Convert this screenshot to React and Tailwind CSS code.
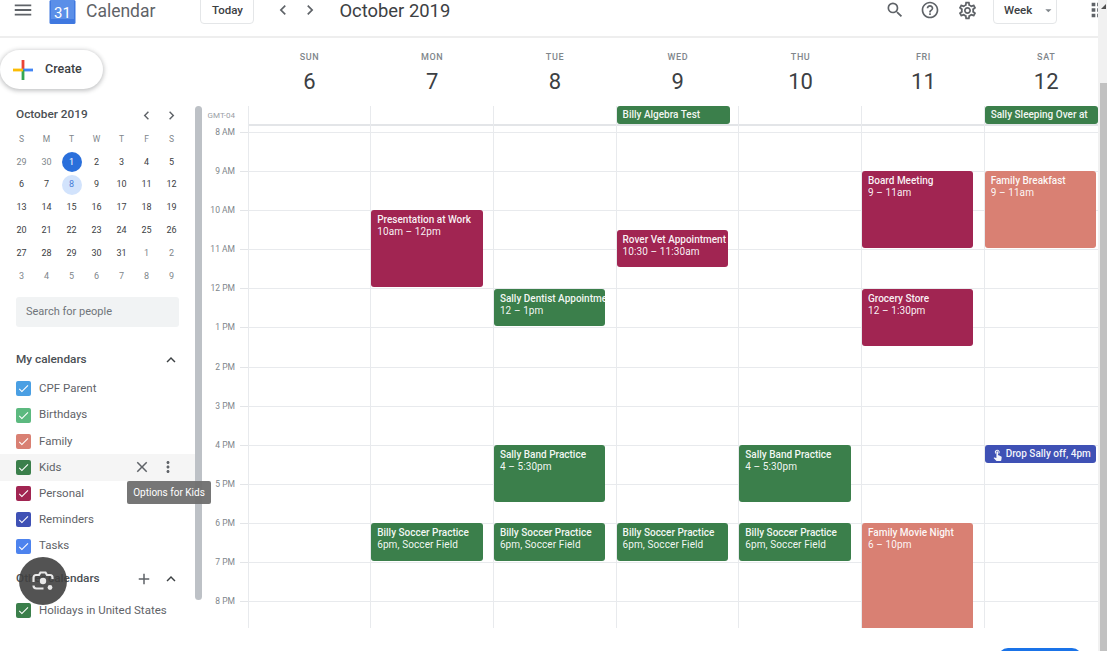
import React from "react";
import { MdMenu, MdChevronLeft, MdChevronRight, MdSearch, MdHelpOutline, MdOutlineSettings, MdArrowDropDown, MdApps, MdExpandLess, MdClose, MdMoreVert, MdAdd, MdCheck, MdTouchApp } from "react-icons/md";

const GREEN = "bg-[#3b7f4b]";
const WINE = "bg-[#a12552]";
const SALMON = "bg-[#d98073]";
const INDIGO = "bg-[#3f51b5]";

const days = [
  ["SUN", "6"], ["MON", "7"], ["TUE", "8"], ["WED", "9"], ["THU", "10"], ["FRI", "11"], ["SAT", "12"],
];
const hours = ["8 AM", "9 AM", "10 AM", "11 AM", "12 PM", "1 PM", "2 PM", "3 PM", "4 PM", "5 PM", "6 PM", "7 PM", "8 PM"];

const soccer = { title: "Billy Soccer Practice", time: "6pm, Soccer Field", top: 417, h: 38, color: GREEN };
const band = { title: "Sally Band Practice", time: "4 – 5:30pm", top: 339, h: 57, color: GREEN };

const events = [
  [],
  [{ title: "Presentation at Work", time: "10am – 12pm", top: 104, h: 77, color: WINE }, soccer],
  [{ title: "Sally Dentist Appointment", time: "12 – 1pm", top: 183, h: 37, color: GREEN }, band, soccer],
  [{ title: "Billy Algebra Test", top: 0, h: 18, color: GREEN, allDay: true }, { title: "Rover Vet Appointment", time: "10:30 – 11:30am", top: 124, h: 37, color: WINE }, soccer],
  [band, soccer],
  [{ title: "Board Meeting", time: "9 – 11am", top: 65, h: 77, color: WINE }, { title: "Grocery Store", time: "12 – 1:30pm", top: 183, h: 57, color: WINE }, { title: "Family Movie Night", time: "6 – 10pm", top: 417, h: 120, color: SALMON }],
  [{ title: "Sally Sleeping Over at", top: 0, h: 18, color: GREEN, allDay: true }, { title: "Family Breakfast", time: "9 – 11am", top: 65, h: 77, color: SALMON }, { title: "Drop Sally off, 4pm", top: 339, h: 18, color: INDIGO, touch: true }],
];

const mini = [
  ["29", "30", "1", "2", "3", "4", "5"],
  ["6", "7", "8", "9", "10", "11", "12"],
  ["13", "14", "15", "16", "17", "18", "19"],
  ["20", "21", "22", "23", "24", "25", "26"],
  ["27", "28", "29", "30", "31", "1", "2"],
  ["3", "4", "5", "6", "7", "8", "9"],
];

const calendars = [
  ["CPF Parent", "bg-[#4a9fe3]"],
  ["Birthdays", "bg-[#5cb97f]"],
  ["Family", "bg-[#d98073]"],
  ["Kids", "bg-[#3b7f4b]"],
  ["Personal", "bg-[#a12552]"],
  ["Reminders", "bg-[#3f51b5]"],
  ["Tasks", "bg-[#4d83ee]"],
];

function CalRow({ name, color, hover }) {
  return (
    <div className={`flex h-[26.2px] items-center pl-4 ${hover ? "bg-[#f5f5f5]" : ""}`}>
      <span className={`flex h-[15px] w-[15px] items-center justify-center rounded-[2px] ${color}`}>
        <MdCheck className="text-white" size={13} />
      </span>
      <span className="ml-2 flex-1 text-[11.5px] text-[#5f6368]">{name}</span>
      {hover && (
        <span className="flex items-center gap-[8px] pr-[18px] text-[#5f6368]">
          <MdClose size={18} />
          <MdMoreVert size={18} />
        </span>
      )}
    </div>
  );
}

function Event({ e }) {
  return (
    <div
      style={{ top: e.top, height: e.h }}
      className={`absolute left-0 overflow-hidden whitespace-nowrap rounded-[3px] px-[6px] text-[10px] leading-[12px] text-white/95 ${e.allDay ? "w-[113px]" : "w-[111.5px]"} ${e.color} ${e.time ? "pt-[4px]" : "flex items-center"}`}
    >
      {e.touch && <MdTouchApp size={13} className="mr-[2px] shrink-0" />}
      <div className="font-medium">{e.title}</div>
      {e.time && <div className="tracking-[0.1px]">{e.time}</div>}
    </div>
  );
}

function Lens() {
  return (
    <div className="absolute left-[19px] top-[557px] flex h-12 w-12 items-center justify-center rounded-full bg-[#404040]/90">
      <svg width="26" height="26" viewBox="0 0 26 26" fill="none">
        <path d="M3.5 14V9.5A2.5 2.5 0 0 1 6 7h3l1.5-2.5h5L17 7h3a2.5 2.5 0 0 1 2.5 2.5V11" stroke="#e8e8e8" strokeWidth="2.2" />
        <path d="M3.5 17.5A3 3 0 0 0 6.500 20.500h7" stroke="#e8e8e8" strokeWidth="2.2" />
        <circle cx="13" cy="13" r="3.2" fill="#e8e8e8" />
        <circle cx="20" cy="19.500" r="2.400" fill="#e8e8e8" />
      </svg>
    </div>
  );
}

export default function App() {
  return (
    <div className="relative flex h-[651px] w-[1107px] overflow-hidden bg-white font-['Roboto',sans-serif]">
      <div className="flex w-[1098px] shrink-0 flex-col">
        <header className="flex h-[38px] shrink-0 items-start border-b-2 border-[#eeeeee]">
          <div className="flex h-[20px] w-full items-center">
            <MdMenu size={22} className="ml-[12px] text-[#5f6368]" />
            <svg width="27" height="24" viewBox="0 0 27 24" className="ml-[15px] mt-[4px] shrink-0">
              <rect x="0.5" width="26" height="24" rx="1.5" fill="#3f78e0" />
              <rect x="2" width="23" height="19" fill="#5b8fe8" />
              <text x="13.5" y="18" textAnchor="middle" fontSize="15" fill="#fff" fontFamily="Roboto, sans-serif">31</text>
            </svg>
            <span className="ml-[10px] pt-[1px] text-[17.5px] leading-[20px] text-[#5f6368]">Calendar</span>
            <button className="ml-[45px] flex h-[28px] w-[54px] items-center justify-center rounded-[4px] border border-[#e4e6e8] pt-[2px] text-[11.5px] font-medium text-[#3c4043]">Today</button>
            <MdChevronLeft size={20} className="ml-[19px] text-[#5f6368]" />
            <MdChevronRight size={20} className="ml-[7px] text-[#5f6368]" />
            <span className="ml-[19px] pt-[1px] text-[18.4px] leading-[20px] text-[#3c4043]">October 2019</span>
            <span className="flex-1" />
            <MdSearch size={20} className="text-[#5f6368]" />
            <MdHelpOutline size={20} className="ml-[15px] text-[#5f6368]" />
            <MdOutlineSettings size={21} className="ml-[17px] text-[#5f6368]" />
            <button className="ml-[15px] flex h-[28px] w-[64px] items-center rounded-[4px] border border-[#e4e6e8] pl-[10px] pt-[1px] text-[11.5px] font-medium text-[#3c4043]">
              Week
              <MdArrowDropDown size={17} className="ml-[9px] text-[#80868b]" />
            </button>
            <MdApps size={22} className="ml-[31px] mr-[-12px] shrink-0 text-[#5f6368]" />
          </div>
        </header>

        <div className="flex h-[590px] shrink-0 overflow-hidden">
          <aside className="relative w-[195px] shrink-0">
            <button className="ml-0 mt-[12px] flex h-[39px] w-[103px] items-center rounded-full bg-white pl-[13px] text-[12.5px] font-medium text-[#3c4043] shadow-[0_1px_4px_1px_rgba(60,64,67,0.3)]">
              <svg width="20" height="20" viewBox="0 0 20 20">
                <rect x="8.6" y="0" width="2.8" height="10" fill="#ea4335" />
                <rect x="10" y="8.6" width="10" height="2.8" fill="#4285f4" />
                <rect x="8.6" y="10" width="2.8" height="10" fill="#34a853" />
                <rect x="0" y="8.6" width="10" height="2.8" fill="#fbbc05" />
              </svg>
              <span className="ml-[12px]">Create</span>
            </button>

            <div className="ml-4 mt-[17px] flex h-[18px] w-[164px] items-center">
              <span className="flex-1 text-[11.8px] font-medium text-[#4b4f54]">October 2019</span>
              <MdChevronLeft size={17} className="text-[#5f6368]" />
              <MdChevronRight size={17} className="ml-2 text-[#5f6368]" />
            </div>

            <div className="ml-[9px] mt-[4px] grid w-[175px] grid-cols-7 text-center text-[9px]">
              {["S", "M", "T", "W", "T", "F", "S"].map((d, i) => (
                <div key={i} className="flex h-[23px] items-center justify-center text-[8.5px] text-[#80868b]">{d}</div>
              ))}
              {mini.flat().map((d, i) => {
                const muted = i < 2 || i >= 33;
                const today = i === 2;
                const sel = i === 9;
                return (
                  <div key={i} className="flex h-[22.8px] items-center justify-center">
                    <span className={`flex h-[20px] w-[20px] items-center justify-center rounded-full ${today ? "bg-[#2a6fdb] text-white" : sel ? "bg-[#d2e3fc] text-[#4a7fd8]" : muted ? "text-[#80868b]" : "text-[#3c4043]"}`}>{d}</span>
                  </div>
                );
              })}
            </div>

            <div className="ml-4 mt-[9px] flex h-[30px] w-[163px] items-center rounded-[3px] bg-[#f1f3f4] pl-[10px] text-[11px] text-[#70757a]">Search for people</div>

            <div className="ml-4 mt-[23px] flex h-[20px] w-[164px] items-center justify-between text-[11.8px] font-medium text-[#4b4f54]">
              My calendars
              <MdExpandLess size={18} className="text-[#3c4043]" />
            </div>
            <div className="mt-[6px]">
              {calendars.map(([n, c]) => (
                <CalRow key={n} name={n} color={c} hover={n === "Kids"} />
              ))}
            </div>
            <div className="ml-4 mt-[10px] flex h-[20px] w-[164px] items-center text-[11.8px] font-medium text-[#4b4f54]">
              <span className="flex-1">Other calendars</span>
              <MdAdd size={18} className="text-[#5f6368]" />
              <MdExpandLess size={18} className="ml-[9px] text-[#3c4043]" />
            </div>
            <div className="mt-[8px]">
              <CalRow name="Holidays in United States" color="bg-[#3b7f4b]" />
            </div>
          </aside>

          <div className="w-[7px] shrink-0 pt-[68px]">
            <div className="h-[494px] rounded-full bg-[#bdc1c6]" />
          </div>

          <main className="flex min-w-0 flex-1 flex-col overflow-hidden">
            <div className="flex h-[68px] shrink-0 pl-[46px]">
              {days.map(([d, n]) => (
                <div key={d} className="flex w-[122.8px] shrink-0 flex-col items-center pt-[14px]">
                  <span className="text-[9px] font-medium leading-[11px] tracking-[0.6px] text-[#80868b]">{d}</span>
                  <span className="mt-[5px] text-[22px] leading-[28px] text-[#3c4043]">{n}</span>
                </div>
              ))}
            </div>
            <div className="flex flex-1 overflow-hidden">
              <div className="w-[45.5px] shrink-0">
                <div className="flex h-[20px] items-center justify-end pr-[12.5px] text-[8px] text-[#9aa0a6]">GMT-04</div>
                <div className="h-[6px]" />
                {hours.map((h) => (
                  <div key={h} className="relative h-[39.1px]">
                    <span className="absolute right-[12.5px] top-0 -translate-y-1/2 text-[8.5px] text-[#80868b]">{h}</span>
                    <span className="absolute right-0 top-0 h-px w-[8px] bg-[#e3e5e8]" />
                  </div>
                ))}
              </div>
              {days.map(([d], i) => (
                <div key={d} className="relative w-[122.7px] shrink-0 border-l border-[#e8eaed]">
                  <div className="h-[20px] border-b-2 border-[#e3e5e8]" />
                  <div className="h-[6px]" />
                  {hours.map((h) => (
                    <div key={h} className="h-[39.1px] border-t border-[#e8eaed]" />
                  ))}
                  {events[i].map((e) => (
                    <Event key={e.title} e={e} />
                  ))}
                </div>
              ))}
            </div>
          </main>
        </div>
      </div>

      <div className="relative flex w-[9px] shrink-0 flex-col bg-[#f1f1f1] pl-[2px] pt-[83px]">
        <div className="absolute right-[1px] top-[4px] h-0 w-0 border-b-[5px] border-l-[5px] border-b-[#505050] border-l-transparent" />
        <div className="flex-1 bg-[#c1c1c1]" />
      </div>

      <div className="absolute left-[127px] top-[481px] flex h-[23px] w-[84px] items-center justify-center rounded-[2px] bg-[#6f6f6f]/95 text-[10px] text-white">Options for Kids</div>
      <Lens />
      <div className="absolute left-[998px] top-[648px] h-[20px] w-[84px] rounded-full bg-[#1a73e8]" />
    </div>
  );
}
